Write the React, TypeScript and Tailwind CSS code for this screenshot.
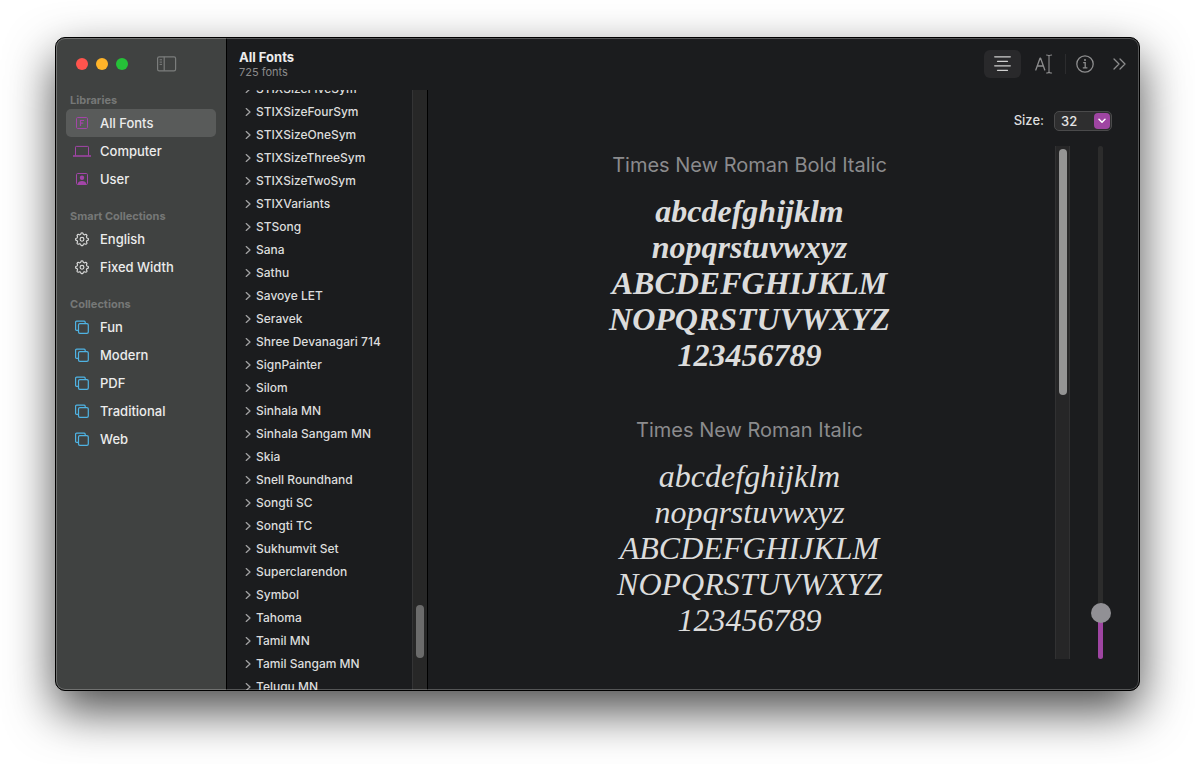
import React from "react";
import clsx from "clsx";

const families = [
  "STIXSizeFiveSym", "STIXSizeFourSym", "STIXSizeOneSym", "STIXSizeThreeSym", "STIXSizeTwoSym",
  "STIXVariants", "STSong", "Sana", "Sathu", "Savoye LET", "Seravek", "Shree Devanagari 714",
  "SignPainter", "Silom", "Sinhala MN", "Sinhala Sangam MN", "Skia", "Snell Roundhand",
  "Songti SC", "Songti TC", "Sukhumvit Set", "Superclarendon", "Symbol", "Tahoma", "Tamil MN",
  "Tamil Sangam MN", "Telugu MN",
];

const sampleLines = ["abcdefghijklm", "nopqrstuvwxyz", "ABCDEFGHIJKLM", "NOPQRSTUVWXYZ", "123456789"];

function FontBookIcon() {
  return (
    <svg width="18" height="16" viewBox="0 0 18 16" fill="none" stroke="#a345a8" aria-hidden="true">
      <rect x="3.5" y="2.5" width="11" height="11" rx="1.2" />
      <path d="M7.5 11V5.5H11M7.5 8.2h2.8" strokeWidth="1.2" />
    </svg>
  );
}

function LaptopIcon() {
  return (
    <svg width="18" height="16" viewBox="0 0 18 16" fill="none" stroke="#a345a8" aria-hidden="true">
      <path d="M2.5 12.5V4.2a.8.8 0 0 1 .8-.8h11.4a.8.8 0 0 1 .8.8v8.3" />
      <path d="M0 13h18" strokeWidth="1.3" />
    </svg>
  );
}

function UserIcon() {
  return (
    <svg width="18" height="16" viewBox="0 0 18 16" fill="none" stroke="#a345a8" aria-hidden="true">
      <rect x="3.5" y="2.5" width="11" height="11" rx="1.2" />
      <circle cx="9" cy="6.8" r="2.2" fill="#a345a8" stroke="none" />
      <path d="M4.6 13.2c.3-2.2 2-3.2 4.4-3.2s4.1 1 4.4 3.2z" fill="#a345a8" stroke="none" />
    </svg>
  );
}

function GearIcon() {
  const points: string[] = [];
  for (let i = 0; i < 96; i++) {
    const a = (i / 96) * Math.PI * 2;
    const r = 5.7 + 0.7 * Math.tanh(2.4 * Math.cos(8 * a));
    points.push(`${(9 + r * Math.sin(a)).toFixed(2)},${(8.3 - r * Math.cos(a)).toFixed(2)}`);
  }
  return (
    <svg width="18" height="16" viewBox="0 0 18 16" fill="none" stroke="#d9dad9" strokeWidth="1.15" aria-hidden="true">
      <path d={`M${points.join("L")}Z`} strokeLinejoin="round" />
      <circle cx="9" cy="8.3" r="1.9" />
    </svg>
  );
}

function StackIcon() {
  return (
    <svg width="18" height="16" viewBox="0 0 18 16" fill="none" stroke="#4fb3e3" strokeWidth="1.2" aria-hidden="true">
      <path d="M5.3 11.4H3.6a1 1 0 0 1-1-1V3.2a1 1 0 0 1 1-1h7.6a1 1 0 0 1 1 1v1.4" />
      <rect x="5.5" y="4.7" width="9.8" height="9.6" rx="1.4" />
    </svg>
  );
}

type Item = { name: string; icon: () => React.ReactElement; selected?: boolean };

const sections: { title: string; items: Item[] }[] = [
  {
    title: "Libraries",
    items: [
      { name: "All Fonts", icon: FontBookIcon, selected: true },
      { name: "Computer", icon: LaptopIcon },
      { name: "User", icon: UserIcon },
    ],
  },
  {
    title: "Smart Collections",
    items: [
      { name: "English", icon: GearIcon },
      { name: "Fixed Width", icon: GearIcon },
    ],
  },
  {
    title: "Collections",
    items: ["Fun", "Modern", "PDF", "Traditional", "Web"].map((name) => ({ name, icon: StackIcon })),
  },
];

function Sidebar() {
  return (
    <aside className="flex w-[171px] shrink-0 flex-col border-r border-black bg-[#404241]">
      <div className="flex h-[53px] shrink-0 items-center gap-2 pb-px pl-5">
        <button aria-label="Close" className="size-3 rounded-full bg-[#ff544d]" />
        <button aria-label="Minimize" className="size-3 rounded-full bg-[#ffb429]" />
        <button aria-label="Zoom" className="size-3 rounded-full bg-[#25c138]" />
        <button aria-label="Toggle sidebar" className="ml-5">
          <svg width="21" height="16" viewBox="0 0 21 16" fill="none" stroke="#7b7d7c" strokeWidth="1.2" aria-hidden="true">
            <rect x="1.6" y=".8" width="18" height="14" rx="1.6" />
            <path d="M8.2 .8v14" />
            <path d="M3.6 3.8h2.4M3.6 6.1h2.4M3.6 8.4h2.4" strokeWidth="1" />
          </svg>
        </button>
      </div>
      <nav aria-label="Collections" className="flex flex-col gap-3.5 px-2.5">
        {sections.map((section) => (
          <section key={section.title}>
            <h2 className="pl-1 text-[11px] leading-[18px] font-bold text-[#767877]">{section.title}</h2>
            <ul>
              {section.items.map(({ name, icon: Icon, selected }) => (
                <li key={name}>
                  <button
                    className={clsx(
                      "flex h-7 w-full items-center gap-2 rounded-[5px] pl-[7px] text-left text-[13px] leading-4 font-medium text-[#ececec]",
                      selected && "bg-[#595b5a]",
                    )}
                  >
                    <Icon />
                    <span className="pl-px">{name}</span>
                  </button>
                </li>
              ))}
            </ul>
          </section>
        ))}
      </nav>
    </aside>
  );
}

function Toolbar() {
  return (
    <header className="flex h-[52px] shrink-0 items-center justify-between pr-[13px] pl-3">
      <div>
        <h1 className="text-[13px] leading-[15px] font-bold text-[#ededed]">All Fonts</h1>
        <p className="text-[11px] leading-[14px] text-[#8b8b8c]">725 fonts</p>
      </div>
      <div className="flex items-center">
        <button aria-label="Sample" className="flex h-7 w-[37px] items-center justify-center rounded-md bg-[#29292b]">
          <svg width="17" height="16" viewBox="0 0 17 16" fill="none" stroke="#cfcfcf" strokeWidth="1.3" strokeLinecap="round" aria-hidden="true">
            <path d="M.7 .8h15.6M3.5 5.3h10M.7 9.8h15.6M3.5 14.3h10" />
          </svg>
        </button>
        <button aria-label="Custom" className="ml-3.5">
          <svg width="18" height="20" viewBox="0 0 18 20" fill="none" stroke="#8d8d8e" strokeWidth="1.3" strokeLinecap="round" strokeLinejoin="round" aria-hidden="true">
            <path d="M.8 16 5 4.2h.6L9.8 16M2.2 12h6.2" />
            <path d="M11.6 1c1.4 0 2.4.2 2.4 1.3v15.4c0 1.1-1 1.3-2.4 1.3M16.6 1C15 1 14 1.2 14 2.3v15.4c0 1.1 1 1.3 2.6 1.3" strokeWidth="1.1" />
          </svg>
        </button>
        <div className="ml-3 h-5 w-px bg-[#2c2c2e]" />
        <button aria-label="Info" className="ml-2.5">
          <svg width="18" height="18" viewBox="0 0 18 18" fill="none" stroke="#8d8d8e" strokeWidth="1.3" aria-hidden="true">
            <circle cx="9" cy="9" r="8.2" />
            <path d="M7.2 7.7h2v5M6.8 12.9h4.6" />
            <circle cx="9" cy="5" r="1.1" fill="#8d8d8e" stroke="none" />
          </svg>
        </button>
        <button aria-label="More" className="ml-[19px]">
          <svg width="13" height="12" viewBox="0 0 13 12" fill="none" stroke="#8d8d8e" strokeWidth="1.3" strokeLinecap="round" strokeLinejoin="round" aria-hidden="true">
            <path d="m1 1 5 5-5 5M7 1l5 5-5 5" />
          </svg>
        </button>
      </div>
    </header>
  );
}

function FamilyList() {
  return (
    <div className="flex w-[201px] shrink-0 border-r border-black">
      <div className="min-h-0 flex-1 overflow-hidden">
        <ul className="-mt-[13px]">
          {families.map((name) => (
            <li key={name}>
              <button className="flex h-[23px] w-full items-center gap-[5px] pl-[18px] text-left text-[12px] font-medium text-[#dcdcdc]">
                <svg width="6" height="10" viewBox="0 0 6 10" fill="none" stroke="#a2a2a3" strokeWidth="1.3" strokeLinecap="round" strokeLinejoin="round" aria-hidden="true">
                  <path d="m1.2 1.6 3.8 3.4-3.8 3.4" />
                </svg>
                <span className="whitespace-nowrap">{name}</span>
              </button>
            </li>
          ))}
        </ul>
      </div>
      <div className="flex w-[15px] shrink-0 flex-col items-center justify-end border-l border-[#343435] bg-[#272727] pb-8">
        <div className="h-[53px] w-2 rounded-full bg-[#6b6b6b]" />
      </div>
    </div>
  );
}

function Sample({ name, bold }: { name: string; bold?: boolean }) {
  return (
    <article className="flex h-[265px] shrink-0 flex-col items-center">
      <h2 className="pt-[5px] pb-3.5 text-[20px] leading-7 text-[#8b8b8d]">{name}</h2>
      <div
        className={clsx(
          "text-center font-['Liberation_Serif',serif] text-[32px] leading-9 text-[#dcdcdc] italic",
          bold && "font-bold",
        )}
      >
        {sampleLines.map((line) => (
          <p key={line}>{line}</p>
        ))}
      </div>
    </article>
  );
}

function Preview() {
  return (
    <main className="flex min-w-0 flex-1 flex-col pt-[21px] pb-[31px]">
      <div className="flex h-5 shrink-0 items-center justify-end gap-2.5 pr-[27px] text-[13px] font-medium text-[#dedede]">
        <label htmlFor="size">Size:</label>
        <div className="relative">
          <select
            id="size"
            defaultValue="32"
            className="block h-5 w-[58px] appearance-none rounded-[5px] border border-[#4a4a4b] bg-[#2e2e2f] pl-1.5 text-[13px] leading-4 font-medium text-[#e4e4e4] outline-none"
          >
            <option>24</option>
            <option>32</option>
            <option>48</option>
          </select>
          <span className="pointer-events-none absolute top-0.5 right-0.5 flex size-4 items-center justify-center rounded bg-[#9f45a2]">
            <svg width="8" height="6" viewBox="0 0 8 6" fill="none" stroke="#fff" strokeWidth="1.5" strokeLinecap="round" strokeLinejoin="round" aria-hidden="true">
              <path d="m1 1.2 3 3 3-3" />
            </svg>
          </span>
        </div>
      </div>
      <div className="mt-[15px] flex min-h-0 flex-1 pr-[29px]">
        <div className="min-w-0 flex-1 overflow-hidden pl-4">
          <Sample name="Times New Roman Bold Italic" bold />
          <Sample name="Times New Roman Italic" />
        </div>
        <div className="flex w-[15px] shrink-0 flex-col items-center border-x border-[#313132] bg-[#262627] pt-[3px]">
          <div className="h-[246px] w-2 rounded-full bg-[#949494]" />
        </div>
        <input
          type="range"
          aria-label="Sample size"
          min={9}
          max={324}
          defaultValue={32}
          className="ml-[21px] h-full w-[19px] appearance-none bg-transparent [direction:rtl] [writing-mode:vertical-lr] [&::-webkit-slider-runnable-track]:w-[5px] [&::-webkit-slider-runnable-track]:rounded-full [&::-webkit-slider-runnable-track]:bg-[linear-gradient(to_top,#9f45a2_9%,#2c2c2c_9%)] [&::-webkit-slider-thumb]:-ml-[7px] [&::-webkit-slider-thumb]:size-5 [&::-webkit-slider-thumb]:appearance-none [&::-webkit-slider-thumb]:rounded-full [&::-webkit-slider-thumb]:bg-[#919095]"
        />
      </div>
    </main>
  );
}

export default function App() {
  return (
    <div className="flex h-screen flex-col bg-white px-[55px] pt-[37px] pb-[73px] font-['Inter',sans-serif]">
      <div className="relative flex min-h-0 flex-1 overflow-hidden rounded-[10px] border border-black bg-[#1b1c1e] shadow-[0_20px_48px_rgba(0,0,0,0.7)]">
        <Sidebar />
        <div className="flex min-w-0 flex-1 flex-col">
          <Toolbar />
          <div className="flex min-h-0 flex-1">
            <FamilyList />
            <Preview />
          </div>
        </div>
        <div className="pointer-events-none absolute inset-0 rounded-[9px] border border-white/25" />
      </div>
    </div>
  );
}
